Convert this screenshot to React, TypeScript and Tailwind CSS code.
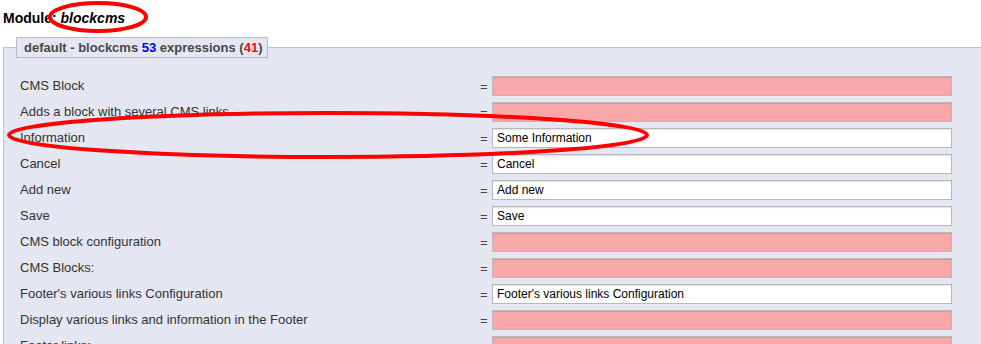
const rows: { label: string; value?: string }[] = [
  { label: "CMS Block" },
  { label: "Adds a block with several CMS links" },
  { label: "Information", value: "Some Information" },
  { label: "Cancel", value: "Cancel" },
  { label: "Add new", value: "Add new" },
  { label: "Save", value: "Save" },
  { label: "CMS block configuration" },
  { label: "CMS Blocks:" },
  { label: "Footer's various links Configuration", value: "Footer's various links Configuration" },
  { label: "Display various links and information in the Footer" },
  { label: "Footer links:" },
  { label: "Link" },
];

export default function App() {
  return (
    <div className="relative w-[981px] h-[344px] overflow-hidden bg-white font-['Liberation_Sans',Arial,sans-serif]">
      <h2 className="pl-[3px] pt-[10px] h-[37px] text-[14px] font-bold leading-[17px] text-black">
        Module: <em>blockcms</em>
      </h2>

      <fieldset className="ml-[3px] w-[1010px] border border-[#bec2ce] bg-[#e4e7f1] pl-[16px] pt-[15px]">
        <legend className="-ml-[4px] h-[21px] border border-[#b7bbc8] bg-[#e4e7f1] pl-[7px] pr-[5px] text-[13px] font-bold leading-[19px] text-[#474747]">
          default - blockcms <span className="text-[#0000ff]">53</span> expressions (
          <span className="text-[#ff0000]">41</span>)
        </legend>

        <div className="flex flex-col">
          {rows.map((row) => (
            <div key={row.label} className="flex h-[26px] items-center">
              <div className="w-[460px] text-[13px] text-[#333]">{row.label}</div>
              <div className="w-[12px] text-[13px] text-[#444] leading-none">=</div>
              <div
                className={
                  "h-[20px] w-[460px] border border-[#b8b8b8] shadow-[inset_0_1px_1px_rgba(0,0,0,0.12)] pl-[4px] text-[12px] leading-[18px] text-black " +
                  (row.value ? "bg-white" : "bg-[#f8a8a9]")
                }
              >
                {row.value}
              </div>
            </div>
          ))}
        </div>
      </fieldset>

      {/* red annotation marks */}
      <svg className="absolute left-0 top-0 pointer-events-none" width="981" height="344">
        <ellipse cx="98" cy="17" rx="48" ry="14" fill="none" stroke="#ff0000" strokeWidth="4" />
        <ellipse cx="328" cy="135" rx="319" ry="22" fill="none" stroke="#ff0000" strokeWidth="4" />
      </svg>
    </div>
  );
}
